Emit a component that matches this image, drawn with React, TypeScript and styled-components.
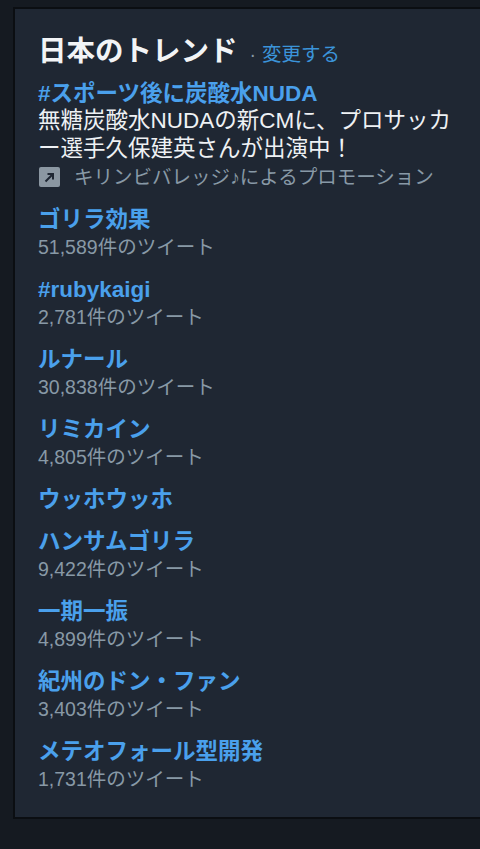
import React from "react";
import styled, { createGlobalStyle } from "styled-components";

const Global = createGlobalStyle`
  html, body {
    margin: 0;
    padding: 0;
    background: #151a21;
    overflow: hidden;
  }
  body {
    font-family: "Liberation Sans", "Noto Sans CJK JP", sans-serif;
    -webkit-font-smoothing: antialiased;
  }
`;

const Page = styled.div`
  width: 480px;
  height: 849px;
  padding: 7px 0 0 13px;
  box-sizing: border-box;
  overflow: hidden;
`;

const Card = styled.section`
  width: 520px;
  height: 812px;
  box-sizing: border-box;
  background: #1f2733;
  border: 2px solid #0b0e12;
  padding: 26px 0 16px 23px;
  display: flex;
  flex-direction: column;
`;

const Header = styled.div`
  display: flex;
  align-items: baseline;
  height: 32px;
  line-height: 32px;
  margin-bottom: 6px;
`;

const Title = styled.h3`
  margin: 0;
  font-size: 28.5px;
  font-weight: 700;
  color: #f2f4f6;
  letter-spacing: 0;
`;

const Dot = styled.span`
  color: #8899a6;
  font-size: 19.5px;
  margin: 0 6px 0 12px;
`;

const Change = styled.a`
  color: #3b94d9;
  font-size: 19.5px;
  text-decoration: none;
`;

const List = styled.ul`
  list-style: none;
  margin: 0;
  padding: 0;
`;

const Item = styled.li`
  padding: 8px 0;
`;

const Name = styled.div`
  font-size: 22.5px;
  line-height: 26px;
  font-weight: 700;
  color: #4aa0ec;
  white-space: nowrap;
`;

const Desc = styled.div`
  font-size: 22.5px;
  line-height: 28px;
  color: #eef1f4;
  width: 432px;
`;

const Meta = styled.div`
  display: flex;
  align-items: center;
  font-size: 19.5px;
  line-height: 28px;
  color: #8899a6;
  white-space: nowrap;
`;

const PromoIcon = styled.span`
  display: inline-flex;
  align-items: center;
  justify-content: center;
  width: 21px;
  height: 20px;
  border-radius: 2px;
  background: #8b97a2;
  margin: 0 14px 0 1px;
  flex: none;
`;

type Trend = { name: string; count?: string };

const trends: Trend[] = [
  { name: "ゴリラ効果", count: "51,589件のツイート" },
  { name: "#rubykaigi", count: "2,781件のツイート" },
  { name: "ルナール", count: "30,838件のツイート" },
  { name: "リミカイン", count: "4,805件のツイート" },
  { name: "ウッホウッホ" },
  { name: "ハンサムゴリラ", count: "9,422件のツイート" },
  { name: "一期一振", count: "4,899件のツイート" },
  { name: "紀州のドン・ファン", count: "3,403件のツイート" },
  { name: "メテオフォール型開発", count: "1,731件のツイート" },
];

export default function App() {
  return (
    <>
      <Global />
      <Page>
        <Card>
          <Header>
            <Title>日本のトレンド</Title>
            <Dot>·</Dot>
            <Change href="#">変更する</Change>
          </Header>
          <List>
            <Item>
              <Name>#スポーツ後に炭酸水NUDA</Name>
              <Desc>無糖炭酸水NUDAの新CMに、プロサッカー選手久保建英さんが出演中！</Desc>
              <Meta>
                <PromoIcon>
                  <svg width="13" height="13" viewBox="0 0 13 13">
                    <path d="M2.5 10.5 L10 3 M4.5 3 H10 V8.5" stroke="#1f2733" strokeWidth="2" fill="none" />
                  </svg>
                </PromoIcon>
                キリンビバレッジ♪によるプロモーション
              </Meta>
            </Item>
            {trends.map((t) => (
              <Item key={t.name}>
                <Name>{t.name}</Name>
                {t.count && <Meta>{t.count}</Meta>}
              </Item>
            ))}
          </List>
        </Card>
      </Page>
    </>
  );
}
